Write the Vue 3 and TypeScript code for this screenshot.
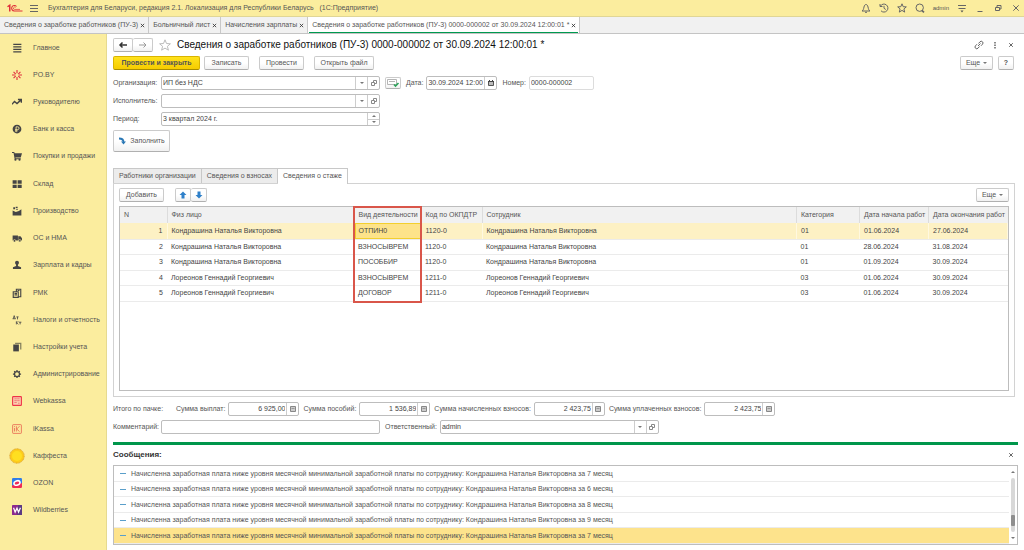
<script setup lang="ts">
import { ref } from 'vue'

interface WindowTab { title: string; active?: boolean }
interface Row { n: number; person: string; kind: string; code: string; category: string; from: string; to: string }
interface Total { id: string; label: string; value: string }

const windowTabs: WindowTab[] = [
  { title: 'Сведения о заработке работников (ПУ-3)' },
  { title: 'Больничный лист' },
  { title: 'Начисления зарплаты' },
  { title: 'Сведения о заработке работников (ПУ-3) 0000-000002 от 30.09.2024 12:00:01 *', active: true },
]

const sections: { icon: string; title: string }[] = [
  { icon: 'lines', title: 'Главное' },
  { icon: 'spark', title: 'PO.BY' },
  { icon: 'chart', title: 'Руководителю' },
  { icon: 'coin', title: 'Банк и касса' },
  { icon: 'cart', title: 'Покупки и продажи' },
  { icon: 'grid', title: 'Склад' },
  { icon: 'factory', title: 'Производство' },
  { icon: 'truck', title: 'ОС и НМА' },
  { icon: 'person', title: 'Зарплата и кадры' },
  { icon: 'register', title: 'РМК' },
  { icon: 'dtkt', title: 'Налоги и отчетность' },
  { icon: 'books', title: 'Настройки учета' },
  { icon: 'gear', title: 'Администрирование' },
  { icon: 'webkassa', title: 'Webkassa' },
  { icon: 'ikassa', title: 'iKassa' },
  { icon: 'sun', title: 'Каффеста' },
  { icon: 'ozon', title: 'OZON' },
  { icon: 'wb', title: 'Wildberries' },
]

const kondr = 'Кондрашина Наталья Викторовна'
const lore = 'Лореонов Геннадий Георгиевич'
const rows: Row[] = [
  { n: 1, person: kondr, kind: 'ОТПИН0', code: '1120-0', category: '01', from: '01.06.2024', to: '27.06.2024' },
  { n: 2, person: kondr, kind: 'ВЗНОСЫВРЕМ', code: '1120-0', category: '01', from: '28.06.2024', to: '31.08.2024' },
  { n: 3, person: kondr, kind: 'ПОСОББИР', code: '1120-0', category: '01', from: '01.09.2024', to: '30.09.2024' },
  { n: 4, person: lore, kind: 'ВЗНОСЫВРЕМ', code: '1211-0', category: '03', from: '01.06.2024', to: '30.09.2024' },
  { n: 5, person: lore, kind: 'ДОГОВОР', code: '1211-0', category: '03', from: '01.06.2024', to: '30.09.2024' },
]
const selected = ref(1)

const totals: Total[] = [
  { id: 'paid', label: 'Сумма выплат:', value: '6 925,00' },
  { id: 'benefit', label: 'Сумма пособий:', value: '1 536,89' },
  { id: 'accrued', label: 'Сумма начисленных взносов:', value: '2 423,75' },
  { id: 'settled', label: 'Сумма уплаченных взносов:', value: '2 423,75' },
]

const months = [7, 6, 8, 9, 7]
const organization = ref('ИП без НДС')
const executor = ref('')
const period = ref('3 квартал 2024 г.')
const date = ref('30.09.2024 12:00:01')
const docNumber = ref('0000-000002')
const comment = ref('')
const responsible = ref('admin')
</script>

<template>
  <div class="app">
    <header class="titlebar">
      <svg class="logo" viewBox="0 0 32 16" aria-hidden="true">
        <g fill="none" stroke="#e0303a">
          <path d="M1 5.500l4.500-3V15" stroke-width="3" />
          <path d="M19 5a5.500 5.500 0 1 0-4.500 9H31" stroke-width="2.200" />
          <path d="M17 7a2.300 2.300 0 1 0-2 3.800H26" stroke-width="1.500" />
        </g>
      </svg>
      <button class="icon-btn burger" aria-label="Меню">
        <svg viewBox="0 0 10 10"><path d="M1 2.500h8M1 5.500h8M1 8.500h8" /></svg>
      </button>
      <span class="app-title">Бухгалтерия для Беларуси, редакция 2.1. Локализация для Республики Беларусь&nbsp;&nbsp; (1С:Предприятие)</span>
      <nav class="tools">
        <button class="icon-btn" aria-label="Уведомления"><svg viewBox="0 0 10 10"><path d="M1 8c1.500-1 1.500-2 2-4 .3-1.500 1-2.500 2-2.500S6.700 2.500 7 4c.5 2 .5 3 2 4zM4 9.300h2" /></svg></button>
        <button class="icon-btn" aria-label="История"><svg viewBox="0 0 10 10"><path d="M1.500 3A4 4 0 1 1 2 7.800M1 1v2.500h2.500M5 2.800V5.300l1.800 1.200" /></svg></button>
        <button class="icon-btn" aria-label="Избранное"><svg viewBox="0 0 10 10"><path d="M5 .8l1.200 2.900 3.100.2-2.400 2 .8 3.200L5 7.400 2.300 9.100l.8-3.200-2.400-2 3.100-.2z" /></svg></button>
        <button class="icon-btn" aria-label="Поиск"><svg viewBox="0 0 10 10"><circle cx="4.700" cy="4.700" r="3.700" /><path d="M6.800 7.300L9 9.400" stroke-width="1.600" /></svg></button>
        <button class="user">admin</button>
        <button class="icon-btn" aria-label="Настройки"><svg viewBox="0 0 10 10"><path d="M1 2.500h8M1.500 5.500h7" /><path d="M3.500 7.500h3L5 9.500z" fill="currentColor" stroke="none" /></svg></button>
        <button class="icon-btn" aria-label="Свернуть"><svg viewBox="0 0 10 10"><path d="M2.500 8.500h5" /></svg></button>
        <button class="icon-btn" aria-label="Восстановить"><svg viewBox="0 0 10 10"><path d="M2.500 4.500h4v3h-4zM4 4.500v-2h4V6H6.500" /></svg></button>
        <button class="icon-btn" aria-label="Закрыть"><svg viewBox="0 0 10 10"><path d="M2.300 2.300l5.400 5.400M7.700 2.300L2.300 7.700" /></svg></button>
      </nav>
    </header>

    <div class="window-tabs">
      <div v-for="t in windowTabs" :key="t.title" class="window-tab" :class="{ active: t.active }">
        <button class="plain">{{ t.title }}</button>
        <button class="plain close" aria-label="Закрыть вкладку"><svg viewBox="0 0 6 6"><path d="M1 1l4 4M5 1L1 5" /></svg></button>
      </div>
    </div>

    <div class="body">
      <nav class="sidebar">
        <button v-for="s in sections" :key="s.title" class="section">
          <svg class="section-icon" :class="{ large: s.icon === 'sun' }" viewBox="0 0 16 16" aria-hidden="true">
            <g v-if="s.icon === 'lines'" stroke="#454545" stroke-width="2"><path d="M2 2h13M2 6h13M2 10h13M2 14h13" /></g>
            <g v-else-if="s.icon === 'spark'" stroke="#e0303f" stroke-width="1.800" fill="none"><path d="M8 0v5M8 11v5M2.500 3l3.500 3.500M13.500 3L10 6.500M2.500 13L6 9.500M13.500 13L10 9.500M0 8h5M11 8h5" /></g>
            <g v-else-if="s.icon === 'chart'" stroke="#454545" stroke-width="2.200" fill="none"><path d="M0 11.500l4-4.500 4 3.500L14 5M9.500 4H15v5" /></g>
            <g v-else-if="s.icon === 'coin'"><circle cx="8" cy="8" r="7" fill="#454545" /><path d="M6.500 13V4.500H9a2.200 2.200 0 0 1 0 4.500H5M5 11h4" stroke="#fbed9e" stroke-width="1.400" fill="none" /></g>
            <g v-else-if="s.icon === 'cart'" fill="#454545"><path d="M0 1.500h3.500l.8 2H16l-2 7H5.500l.3 1H14V13H4.300L2.500 3H0z" /><circle cx="5.500" cy="14" r="1.700" /><circle cx="12" cy="14" r="1.700" /></g>
            <path v-else-if="s.icon === 'grid'" fill="#454545" d="M1 2h6.500v5.500H1zM9 2h6.500v5.500H9zM1 9h6.500v5.500H1zM9 9h6.500v5.500H9z" />
            <path v-else-if="s.icon === 'factory'" fill="#454545" d="M1 15V7l5 2.500 5-1.500 4-3v10zM2 2h3v3H2zM6 1h3v2H6zM7 4.500h2v2H7z" />
            <g v-else-if="s.icon === 'truck'" fill="#454545"><path d="M1 4h8.500v8H1zM10 5h3.500L16 8.500V12h-6z" /><circle cx="4" cy="12.500" r="2" stroke="#fbed9e" /><circle cx="12.500" cy="12.500" r="2" stroke="#fbed9e" /></g>
            <g v-else-if="s.icon === 'person'" fill="#454545"><circle cx="8" cy="4.200" r="3.200" /><path d="M6.500 6.500h3v3l5 2v3h-13v-3l5-2z" /></g>
            <g v-else-if="s.icon === 'register'" fill="none" stroke="#454545" stroke-width="1.800"><path d="M2 6h8v9H2zM7 6V2h7v12h-4" /><path d="M4 8.500h4M4 11h4M9 4h3" /></g>
            <g v-else-if="s.icon === 'dtkt'" fill="none" stroke="#454545" stroke-width="1.300"><path d="M1 6h5M2 6l1.500-5L5 6M7 3h3.500M8.800 3v4M7 10v5M10 10l-2.500 2.500L10 15M11 11.500h4M13 11.500V15" /></g>
            <g v-else-if="s.icon === 'books'"><path d="M5 1h10v11h-2V3H5z" fill="#85805e" /><path d="M2 4h9v11H2z" fill="#454545" /></g>
            <g v-else-if="s.icon === 'gear'" fill="none" stroke="#454545"><circle cx="8" cy="8" r="4" stroke-width="2" /><path d="M8 1.500v2M8 12.500v2M1.500 8h2M12.500 8h2M3.500 3.500l1.400 1.400M11.100 11.100l1.400 1.400M12.500 3.500l-1.400 1.400M4.900 11.100l-1.400 1.400" stroke-width="2" /></g>
            <g v-else-if="s.icon === 'webkassa'" fill="none" stroke="#ef3348"><rect x="1" y="1" width="14" height="14" rx="1" stroke-width="1.800" fill="#fbd3b2" /><path d="M4 4.500h8M4 7.500h8M4 10.500h4M10 11.500h3" stroke-width="1.200" stroke-dasharray="2 1" /></g>
            <g v-else-if="s.icon === 'ikassa'" fill="none" stroke="#e8654f" stroke-width="1.300"><rect x="1" y="1" width="14" height="14" rx="1" /><path d="M4 6.500V12M4 3.500V5M7 3.500V12M12 3.500L7.500 8l4.500 4" /></g>
            <g v-else-if="s.icon === 'sun'"><circle cx="8" cy="8" r="7.200" fill="#fdcb1b" stroke="#d9a02c" stroke-width="1" stroke-dasharray="1 .6" /><circle cx="8" cy="8" r="5" fill="#ffdf20" /></g>
            <g v-else-if="s.icon === 'ozon'"><path d="M2 0h12a2 2 0 0 1 2 2v9L0 13V2a2 2 0 0 1 2-2z" fill="#2f7de9" /><path d="M0 12l16-4v6a2 2 0 0 1-2 2H2a2 2 0 0 1-2-2z" fill="#ef2b55" /><ellipse cx="8" cy="8" rx="5" ry="3.500" fill="#ef2b55" stroke="#fff" stroke-width="2.600" transform="rotate(-18 8 8)" /></g>
            <g v-else><rect width="16" height="16" rx="1" fill="#8b2a8e" /><path d="M10 0h5a1 1 0 0 1 1 1v14a1 1 0 0 1-1 1H8z" fill="#5c3a83" /><path d="M2.500 4.500l2.500 7 3-6.500 2.500 6.500 3-7" fill="none" stroke="#fff" stroke-width="2" /></g>
          </svg>
          <span>{{ s.title }}</span>
        </button>
      </nav>

      <main class="main">
        <div class="row heading">
          <div class="btn-group">
            <button class="btn" aria-label="Назад"><svg viewBox="0 0 10 8"><path d="M9 4H2M4.500 1.500L2 4l2.500 2.500" stroke="#333" stroke-width="1.500" /></svg></button>
            <button class="btn" aria-label="Вперёд"><svg viewBox="0 0 10 8"><path d="M1 4h7M5.500 1.500L8 4 5.500 6.500" stroke="#999" /></svg></button>
          </div>
          <button class="plain star" aria-label="В избранное"><svg viewBox="0 0 12 12"><path d="M6 .8l1.500 3.700 3.900.3-3 2.500 1 3.900L6 9.100l-3.400 2.100 1-3.900-3-2.500 3.900-.3z" stroke="#bbb" /></svg></button>
          <h1>Сведения о заработке работников (ПУ-3) 0000-000002 от 30.09.2024 12:00:01 *</h1>
          <div class="heading-tools">
            <button class="icon-btn" aria-label="Ссылка"><svg viewBox="0 0 10 10"><path d="M4 6l2.500-2.500M4.500 3.500L6 1.800a1.700 1.700 0 0 1 2.500 2.400L7 5.800M5.500 6.500L4 8.200a1.700 1.700 0 0 1-2.500-2.400L3 4.200" /></svg></button>
            <button class="icon-btn" aria-label="Ещё действия"><svg viewBox="0 0 10 10"><path d="M5 2v1.500M5 4.500V6M5 7v1.500" stroke-width="1.500" /></svg></button>
            <button class="icon-btn" aria-label="Закрыть форму"><svg viewBox="0 0 10 10"><path d="M3.200 3.200l3.600 3.600M6.800 3.200L3.200 6.800" /></svg></button>
          </div>
        </div>

        <div class="row commands">
          <button class="btn primary">Провести и закрыть</button>
          <button class="btn save">Записать</button>
          <button class="btn post">Провести</button>
          <button class="btn open">Открыть файл</button>
          <div class="right">
            <button class="btn more">Еще <i class="caret"></i></button>
            <button class="btn help">?</button>
          </div>
        </div>

        <div class="row field">
          <label class="caption" for="org">Организация:</label>
          <div class="control wide">
            <input id="org" v-model="organization" />
            <button aria-label="Выбрать организацию"><i class="caret"></i></button>
            <button aria-label="Открыть организацию"><svg viewBox="0 0 8 8"><path d="M1.500 3.500h3v3h-3zM3.500 3.500v-2h3v3h-2" /></svg></button>
          </div>
          <button class="btn check" aria-label="Проверка"><svg viewBox="0 0 14 10"><path d="M1.500 1.500h9v5h-9zM3 3.500h6" stroke="#b5b5b5" /><path d="M8 6.500l1.500 1.500 3-3" stroke="#2ca35a" stroke-width="1.600" /></svg></button>
          <div class="labelled">
            <label for="date">Дата:</label>
            <div class="control date">
              <input id="date" v-model="date" />
              <button aria-label="Календарь"><svg viewBox="0 0 8 8"><path d="M1.500 2.500h5v4h-5z" fill="#bbb" stroke="#555" /><path d="M1 2.500h6M2.500 1v1M5.500 1v1" stroke="#444" /></svg></button>
            </div>
          </div>
          <div class="labelled">
            <label for="number">Номер:</label>
            <div class="control number"><input id="number" v-model="docNumber" /></div>
          </div>
        </div>

        <div class="row field">
          <label class="caption" for="executor">Исполнитель:</label>
          <div class="control wide">
            <input id="executor" v-model="executor" />
            <button aria-label="Выбрать исполнителя"><i class="caret"></i></button>
            <button aria-label="Открыть исполнителя"><svg viewBox="0 0 8 8"><path d="M1.500 3.500h3v3h-3zM3.500 3.500v-2h3v3h-2" /></svg></button>
          </div>
        </div>

        <div class="row field">
          <label class="caption" for="period">Период:</label>
          <div class="control wide">
            <input id="period" v-model="period" />
            <div class="spin">
              <button aria-label="Следующий период"><i class="caret up"></i></button>
              <button aria-label="Предыдущий период"><i class="caret"></i></button>
            </div>
          </div>
        </div>

        <button class="btn fill">
          <svg viewBox="0 0 8 8"><path d="M1 1.500c3 0 4.500 1 4.500 3.500" stroke="#2a78b5" stroke-width="1.800" /><path d="M3 4.500h5L5.500 7.500z" fill="#2a78b5" stroke="none" /></svg>
          Заполнить
        </button>

        <div class="page-tabs" role="tablist">
          <button role="tab">Работники организации</button>
          <button role="tab">Сведения о взносах</button>
          <button role="tab" class="active" aria-selected="true">Сведения о стаже</button>
        </div>

        <section class="panel">
          <div class="row panel-tools">
            <button class="btn add">Добавить</button>
            <div class="btn-group arrows">
              <button class="btn" aria-label="Вверх"><svg viewBox="0 0 8 8"><path d="M4 .5L7.500 4h-2v3.500h-3V4h-2z" fill="#2f80c9" stroke="none" /></svg></button>
              <button class="btn" aria-label="Вниз"><svg viewBox="0 0 8 8"><path d="M4 7.500L.5 4h2V.5h3V4h2z" fill="#2f80c9" stroke="none" /></svg></button>
            </div>
            <button class="btn more right">Еще <i class="caret"></i></button>
          </div>

          <div class="table-box">
            <div class="table-wrap">
              <table>
                <colgroup>
                  <col class="c-n" /><col class="c-person" /><col class="c-kind" /><col class="c-code" />
                  <col /><col class="c-cat" /><col class="c-from" /><col class="c-to" />
                </colgroup>
                <thead>
                  <tr><th>N</th><th>Физ лицо</th><th>Вид деятельности</th><th>Код по ОКПДТР</th><th>Сотрудник</th><th>Категория</th><th>Дата начала работ</th><th>Дата окончания работ</th></tr>
                </thead>
                <tbody>
                  <tr v-for="r in rows" :key="r.n" :class="{ selected: r.n === selected }" @click="selected = r.n">
                    <td class="num">{{ r.n }}</td><td>{{ r.person }}</td><td class="kind">{{ r.kind }}</td><td>{{ r.code }}</td>
                    <td>{{ r.person }}</td><td>{{ r.category }}</td><td>{{ r.from }}</td><td>{{ r.to }}</td>
                  </tr>
                </tbody>
              </table>
              <div class="highlight"></div>
            </div>
          </div>
        </section>

        <div class="row totals">
          <span class="total-caption">Итого по пачке:</span>
          <div v-for="t in totals" :key="t.id" class="labelled">
            <label :for="t.id">{{ t.label }}</label>
            <div class="control amount">
              <input :id="t.id" :value="t.value" />
              <button aria-label="Калькулятор"><svg viewBox="0 0 8 8"><path d="M1.500 1.500h5v5h-5z" fill="#ccc" stroke="#888" /><path d="M2.500 3.500h3" stroke="#999" /></svg></button>
            </div>
          </div>
        </div>

        <div class="row field comment">
          <label class="caption" for="comment">Комментарий:</label>
          <div class="control wide"><input id="comment" v-model="comment" /></div>
          <div class="labelled">
            <label for="responsible">Ответственный:</label>
            <div class="control wide">
              <input id="responsible" v-model="responsible" />
              <button aria-label="Выбрать ответственного"><i class="caret"></i></button>
              <button aria-label="Открыть ответственного"><svg viewBox="0 0 8 8"><path d="M1.500 3.500h3v3h-3zM3.500 3.500v-2h3v3h-2" /></svg></button>
            </div>
          </div>
        </div>

        <section class="messages">
          <div class="messages-head">
            <h2>Сообщения:</h2>
            <button class="icon-btn" aria-label="Закрыть сообщения"><svg viewBox="0 0 10 10"><path d="M3.200 3.200l3.600 3.600M6.800 3.200L3.200 6.800" /></svg></button>
          </div>
          <div class="messages-box">
            <ul>
              <li v-for="(m, i) in months" :key="i" :class="{ current: i === months.length - 1 }">
                <i class="dash"></i>Начисленна заработная плата ниже уровня месячной минимальной заработной платы по сотруднику: Кондрашина Наталья Викторовна за {{ m }} месяц
              </li>
            </ul>
            <div class="scroll" aria-hidden="true">
              <i class="caret up"></i>
              <div class="track"><div class="thumb"></div></div>
              <i class="caret"></i>
            </div>
          </div>
        </section>
      </main>
    </div>
  </div>
</template>

<style>
body { margin: 0; }
</style>

<style scoped>
* { box-sizing: border-box; }
.app {
  display: flex;
  flex-direction: column;
  min-height: 100vh;
  background: #fff;
  color: #555;
  font: 7px/10px "Liberation Sans", Arial, sans-serif;
  white-space: nowrap;
}
button, input { font: inherit; color: inherit; margin: 0; padding: 0; border: 0; background: none; min-width: 0; }
button { display: flex; align-items: center; justify-content: center; white-space: nowrap; flex: none; }
svg { fill: none; stroke: currentColor; stroke-width: 1; display: block; flex: none; }
h1, h2, ul { margin: 0; padding: 0; }
.row { display: flex; align-items: center; }
.right { margin-left: auto; }
.caret { width: 0; height: 0; border: 2px solid transparent; border-top-color: #777; border-bottom-width: 0; }
.caret.up { border-top-width: 0; border-bottom: 2px solid #777; }

.titlebar { display: flex; align-items: center; height: 17px; padding: 0 3px 0 7px; background: #fbed9e; border-bottom: 1px solid #e0d696; }
.logo { width: 16px; height: 8px; }
.icon-btn { width: 10px; height: 10px; }
.icon-btn svg { width: 10px; height: 10px; stroke: #666; }
.burger { margin: 0 9px 0 6px; }
.tools { display: flex; align-items: center; gap: 8px; margin-left: auto; }
.user { font-size: 6px; }

.window-tabs { display: flex; height: 17px; background: #f1f1f1; border-bottom: 1px solid #c4c4c4; }
.window-tab { display: flex; align-items: center; gap: 2px; padding: 0 3px 0 4px; border-right: 1px solid #c8c8c8; }
.window-tab.active { background: linear-gradient(#009a50, #009a50) center bottom / calc(100% - 2px) 1px no-repeat #fff; }
.close svg { width: 5px; height: 5px; stroke: #333; }

.body { display: flex; flex: 1; }
.sidebar { display: flex; flex-direction: column; width: 107px; padding-bottom: 26px; background: #fbed9e; border-right: 1px solid #e6da90; }
.section { flex: 1 1 0; justify-content: flex-start; gap: 11px; padding-left: 12px; }
.section-icon { width: 10px; height: 10px; stroke: none; }
.section-icon.large { width: 16px; height: 16px; margin: 0 -3px; }

.main { display: flex; flex-direction: column; flex: 1; min-width: 0; padding: 4px 6px 5px; }
.btn {
  height: 14px;
  border: 1px solid #cbcbcb;
  border-bottom-color: #b0b0b0;
  border-radius: 2px;
  background: linear-gradient(#fff 50%, #f1f1f1);
}
.btn-group { display: flex; }
.btn-group .btn { width: 20px; }
.btn-group .btn svg { width: 10px; height: 8px; }
.btn-group .btn + .btn { border-left: 0; }
.heading { height: 14px; }
.star { margin: 0 6px 0 6px; }
.star svg { width: 12px; height: 12px; }
h1 { font-size: 10px; line-height: 14px; font-weight: 400; color: #111; }
.heading-tools { display: flex; gap: 6px; margin-left: auto; padding-right: 2px; }
.commands { height: 14px; margin: 4px 0 6px; }
.primary { width: 87px; background: linear-gradient(#ffe21c, #f6cc00); border-color: #d9b400; border-bottom-color: #a98d00; font-weight: 700; }
.save { width: 45px; margin-left: 4px; }
.post { width: 45px; margin-left: 10px; }
.open { width: 60px; margin-left: 10px; }
.commands .right { display: flex; gap: 5px; padding-right: 4px; }
.more { width: 33px; gap: 3px; }
.help { width: 16px; font-weight: 700; }

.field { height: 14px; margin-bottom: 4px; gap: 5px; }
.caption { width: 43px; }
.labelled { display: flex; align-items: center; gap: 3px; }
.control { display: flex; height: 14px; border: 1px solid #bdbdbd; border-radius: 2px; background: #fff; }
.control input { flex: 1; width: 0; padding: 0 1px; outline: none; color: #444; }
.control button { width: 12px; border-left: 1px solid #cdcdcd; }
.control svg { width: 8px; height: 8px; stroke: #888; }
.wide { width: 219px; }
.check { width: 16px; height: 12px; }
.check svg { width: 14px; height: 10px; }
.date { width: 71px; }
.number { width: 65px; border-color: #dcdcdc; }
.spin { display: flex; flex-direction: column; width: 12px; border-left: 1px solid #cdcdcd; }
.spin button { flex: 1; width: 100%; border-left: 0; }
.spin button + button { border-top: 1px solid #cdcdcd; }
.fill { width: 57px; height: 22px; gap: 4px; }
.fill svg { width: 8px; height: 8px; }

.page-tabs { display: flex; margin-top: 16px; height: 16px; position: relative; z-index: 1; }
.page-tabs button { height: 15px; padding: 0 5px; background: #ececec; border: 1px solid #c8c8c8; border-bottom: 0; border-left-width: 0; }
.page-tabs button:first-child { border-left-width: 1px; }
.page-tabs .active { height: 16px; background: #fff; padding-bottom: 1px; }
.panel { display: flex; flex-direction: column; flex: 1; margin: -1px 3px 5px 0; padding: 4px 5px 5px; border: 1px solid #d2d2d2; }
.add { width: 45px; }
.arrows { margin-left: 11px; }
.arrows .btn { width: 16px; }
.arrows .btn svg { width: 8px; }
.table-box { flex: 1; margin-top: 4px; border: 1px solid #bdbdbd; }
.table-wrap { position: relative; }
table { width: 100%; table-layout: fixed; border-collapse: collapse; }
.c-n { width: 47px; }
.c-person { width: 187px; }
.c-kind { width: 67px; }
.c-code { width: 61px; }
.c-cat { width: 63px; }
.c-from { width: 69px; }
.c-to { width: 79px; }
th { height: 16px; padding: 0 4px; text-align: left; font-weight: 400; background: #f1f1f1; border-right: 1px solid #dcdcdc; }
th:last-child { border-right: 0; }
td { height: 15px; padding: 0 4px; border-bottom: 1px solid #ebebeb; color: #444; }
tbody tr:nth-child(odd) td { height: 16px; }
.num { text-align: right; }
.selected td { background: #fdf1c4; border-right: 1px solid #fff8e0; }
.selected .kind { background: #fde38a; box-shadow: inset 0 0 0 1px #f3cf2e; }
.highlight { position: absolute; top: -1px; bottom: -1px; left: 233px; width: 69px; border: 2px solid #d9564a; pointer-events: none; }

.totals { height: 14px; margin-bottom: 4px; gap: 4px; }
.total-caption { width: 59px; }
.amount { width: 71px; }
.amount input { text-align: right; }
.comment { margin-bottom: 8px; }

.messages { border-top: 3px solid #00964b; }
.messages-head { display: flex; align-items: center; justify-content: space-between; height: 20px; padding-right: 2px; }
h2 { font-size: 8px; line-height: 10px; color: #333; }
.messages-box { display: flex; border: 1px solid #bdbdbd; }
ul { flex: 1; min-width: 0; list-style: none; }
li { display: flex; align-items: center; height: 15px; padding-left: 6px; border-bottom: 1px solid #ebebeb; }
li:nth-child(odd) { height: 16px; }
li.current { background: #fde38c; }
.dash { width: 6px; height: 1px; margin-right: 5px; background: #5a9fca; }
.scroll { display: flex; flex-direction: column; align-items: center; gap: 5px; width: 8px; padding: 5px 0; }
.track { display: flex; flex: 1; flex-direction: column; justify-content: flex-end; width: 4px; padding-bottom: 6px; border-radius: 2px; background: #d8d8d8; }
.thumb { height: 11px; border-radius: 1px; background: #8f8f8f; }
</style>
